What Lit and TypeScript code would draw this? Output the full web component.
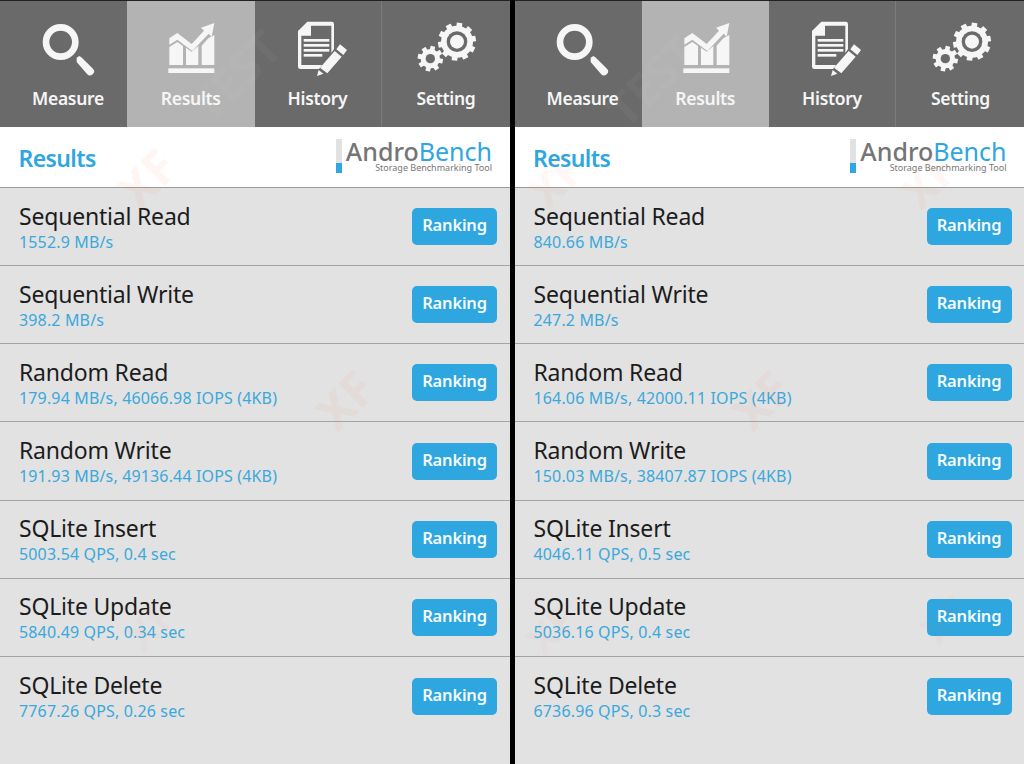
import { LitElement, html, css, svg } from "lit";
import { customElement, property } from "lit/decorators.js";

const W = "#f6f6f6";
const D = "#6a6a6a";

const measureIcon = svg`<svg width="65" height="65" viewBox="0 0 195 195"><circle cx="74" cy="81" r="44" fill="none" stroke=${W} stroke-width="20"/><path d="M122 128l8-5 6 4 35 34a11.500 11.500 0 0 1-18 16l-31-36z" fill=${W}/></svg>`;

const resultsIcon = svg`<svg width="65" height="65" viewBox="0 0 195 195" fill=${W}>
  <path d="M28 70l24-16 43 33 37-40-9-9 40-14-8 41-9-9-49 52-45-34-24 15z"/>
  <path d="M28 96l24-15 17 12v57H28zM78 98l17 12 20-17v57H78zM125 92l20-22 18-10v90h-38z"/>
  <rect x="25" y="160" width="138" height="14"/>
</svg>`;

const historyIcon = svg`<svg width="65" height="65" viewBox="0 0 195 195">
  <path d="M52 20h73a7 7 0 0 1 7 7v75l-8 12v-82H63v30H34v88h62l-9 12H31a7 7 0 0 1-7-7V48z" fill=${W}/>
  <g fill=${W}><rect x="41" y="72" width="77" height="8"/><rect x="41" y="87" width="77" height="8"/><rect x="41" y="102" width="77" height="8"/><rect x="41" y="117" width="56" height="8"/></g>
  <path d="M150 88l21 17-11 15-21-17zM134 108l21 17-43 50-22-17z" fill=${W}/>
  <path d="M86 165l14 11-19 7z" fill=${W}/>
</svg>`;

function gear(cx: number, cy: number, r: number, teeth: number, tw: number, th: number, start: number) {
  const t = [];
  for (let i = 0; i < teeth; i++) {
    const a = (360 / teeth) * i + start;
    t.push(svg`<rect x=${cx - tw / 2} y=${cy - r - th} width=${tw} height=${th + 4} rx="1" transform="rotate(${a} ${cx} ${cy})" fill=${W}/>`);
  }
  return svg`${t}<circle cx=${cx} cy=${cy} r=${r} fill=${W}/>`;
}
const settingIcon = svg`<svg width="70" height="65" viewBox="0 0 210 195">
  ${gear(132, 80, 48, 10, 17, 9, 8)}
  <circle cx="132" cy="80" r="31" fill=${D}/><circle cx="132" cy="80" r="21" fill=${W}/>
  ${gear(52, 131, 29, 8, 14, 9, 12)}
  <circle cx="52" cy="131" r="14" fill=${D}/>
</svg>`;

interface Row { name: string; value: string }
interface Mark { t: string; x: number; y: number; s: number; o: number; c: string }
const left: Row[] = [
  { name: "Sequential Read", value: "1552.9 MB/s" },
  { name: "Sequential Write", value: "398.2 MB/s" },
  { name: "Random Read", value: "179.94 MB/s, 46066.98 IOPS (4KB)" },
  { name: "Random Write", value: "191.93 MB/s, 49136.44 IOPS (4KB)" },
  { name: "SQLite Insert", value: "5003.54 QPS, 0.4 sec" },
  { name: "SQLite Update", value: "5840.49 QPS, 0.34 sec" },
  { name: "SQLite Delete", value: "7767.26 QPS, 0.26 sec" },
];
const right: Row[] = [
  { name: "Sequential Read", value: "840.66 MB/s" },
  { name: "Sequential Write", value: "247.2 MB/s" },
  { name: "Random Read", value: "164.06 MB/s, 42000.11 IOPS (4KB)" },
  { name: "Random Write", value: "150.03 MB/s, 38407.87 IOPS (4KB)" },
  { name: "SQLite Insert", value: "4046.11 QPS, 0.5 sec" },
  { name: "SQLite Update", value: "5036.16 QPS, 0.4 sec" },
  { name: "SQLite Delete", value: "6736.96 QPS, 0.3 sec" },
];
const ORANGE = "#f0784a";
const leftMarks: Mark[] = [
  { t: "XF", x: 147, y: 178, s: 48, o: 0.06, c: ORANGE },
  { t: "XF", x: 345, y: 400, s: 48, o: 0.06, c: ORANGE },
  { t: "XF", x: 150, y: 625, s: 40, o: 0.035, c: ORANGE },
  { t: "TEST", x: 235, y: 75, s: 46, o: 0.035, c: "#ffffff" },
];
const rightMarks: Mark[] = [
  { t: "XF", x: 40, y: 180, s: 44, o: 0.05, c: ORANGE },
  { t: "XF", x: 413, y: 180, s: 44, o: 0.05, c: ORANGE },
  { t: "XF", x: 246, y: 400, s: 48, o: 0.055, c: ORANGE },
  { t: "XF", x: 430, y: 620, s: 40, o: 0.035, c: ORANGE },
  { t: "XF", x: 36, y: 630, s: 40, o: 0.035, c: ORANGE },
  { t: "TEST", x: 136, y: 80, s: 46, o: 0.035, c: "#ffffff" },
];

@customElement("bench-panel")
class BenchPanel extends LitElement {
  @property({ attribute: false }) rows: Row[] = [];
  @property({ attribute: false }) marks: Mark[] = [];
  static styles = css`
    :host { display: flex; flex-direction: column; width: 509.5px; height: 764px; background: #e2e2e2; overflow: hidden; position: relative; font-family: "Noto Sans", sans-serif; }
    .nav { display: grid; grid-template-columns: 127px 127.5px 127px 1fr; height: 127px; box-sizing: border-box; padding-top: 1px; background: #222; flex: none; }
    .tab { background: #6a6a6a; padding-top: 14px; display: flex; flex-direction: column; align-items: center; box-sizing: border-box; color: #f6f6f6; font-size: 17.5px; font-weight: 600; letter-spacing: -0.3px; }
    .tab.on { background: #b3b3b3; }
    .tab.sep { border-right: 1px solid #7c7c7c; }
    .ic { height: 65px; display: flex; }
    .ic svg { display: block; }
    .tab span { line-height: 24px; margin-top: 6px; }
    .s1 { padding-left: 9px; }
    .s2 .ic { margin-left: 4px; }
    .s3 .ic { margin-left: 9px; }
    .s4 { padding-left: 1px; }
    .s4 .ic { margin-left: 4px; }
    .title { height: 61px; box-sizing: border-box; background: #fff; border-bottom: 1.5px solid #9a9a9a; display: flex; align-items: center; justify-content: space-between; padding: 1px 17.5px 0 18.5px; flex: none; }
    .title h1 { margin: 0; font-size: 23px; font-weight: 600; color: #2ea6df; letter-spacing: -0.6px; }
    .logo { display: flex; gap: 4px; align-items: stretch; height: 34px; margin-top: -3px; }
    .mark { width: 6px; background: linear-gradient(#e2e2e2 0 24px, #2ea6df 24px); }
    .brand { display: flex; flex-direction: column; align-items: flex-end; }
    .brand b { font-size: 25px; line-height: 24px; font-weight: 400; color: #2ea6df; }
    .brand b i { font-style: normal; font-weight: 500; color: #757575; }
    .brand small { font-size: 9px; line-height: 10px; color: #777; }
    .row { height: 78.17px; box-sizing: border-box; border-bottom: 1.5px solid #a4a4a4; padding: 0 12.5px 0 19px; display: flex; align-items: center; justify-content: space-between; flex: none; }
    .row.end { border-bottom: none; }
    .txt { display: flex; flex-direction: column; }
    .name { font-size: 23px; line-height: 30px; color: #1c1c1c; letter-spacing: -0.2px; }
    .val { font-size: 16px; line-height: 22px; color: #3aa8dc; letter-spacing: 0.15px; }
    .btn { width: 85px; height: 37px; border-radius: 5px; background: #2ea6df; color: #f4fbff; font-size: 16.5px; font-weight: 600; display: flex; align-items: center; justify-content: center; letter-spacing: -0.2px; padding-bottom: 4px; box-sizing: border-box; }
    .wm { position: absolute; font-weight: 700; line-height: 1; transform: translate(-50%, -50%) rotate(-45deg); pointer-events: none; user-select: none; }
  `;
  render() {
    return html`
      <div class="nav">
        <div class="tab s1"><div class="ic">${measureIcon}</div><span>Measure</span></div>
        <div class="tab on s2"><div class="ic">${resultsIcon}</div><span>Results</span></div>
        <div class="tab sep s3"><div class="ic">${historyIcon}</div><span>History</span></div>
        <div class="tab s4"><div class="ic">${settingIcon}</div><span>Setting</span></div>
      </div>
      <div class="title">
        <h1>Results</h1>
        <div class="logo"><div class="mark"></div><div class="brand"><b><i>Andro</i>Bench</b><small>Storage Benchmarking Tool</small></div></div>
      </div>
      ${this.rows.map((r, i) => html`<div class="row ${i === this.rows.length - 1 ? "end" : ""}"><div class="txt"><div class="name">${r.name}</div><div class="val">${r.value}</div></div><div class="btn">Ranking</div></div>`)}
      ${this.marks.map(m => html`<div class="wm" style="left:${m.x}px;top:${m.y}px;font-size:${m.s}px;opacity:${m.o};color:${m.c}">${m.t}</div>`)}
    `;
  }
}

@customElement("app-root")
export class AppRoot extends LitElement {
  static styles = css`
    :host { display: flex; gap: 5px; width: 1024px; height: 764px; background: #000; overflow: hidden; }
  `;
  render() {
    return html`<bench-panel .rows=${left} .marks=${leftMarks}></bench-panel><bench-panel .rows=${right} .marks=${rightMarks}></bench-panel>`;
  }
}
